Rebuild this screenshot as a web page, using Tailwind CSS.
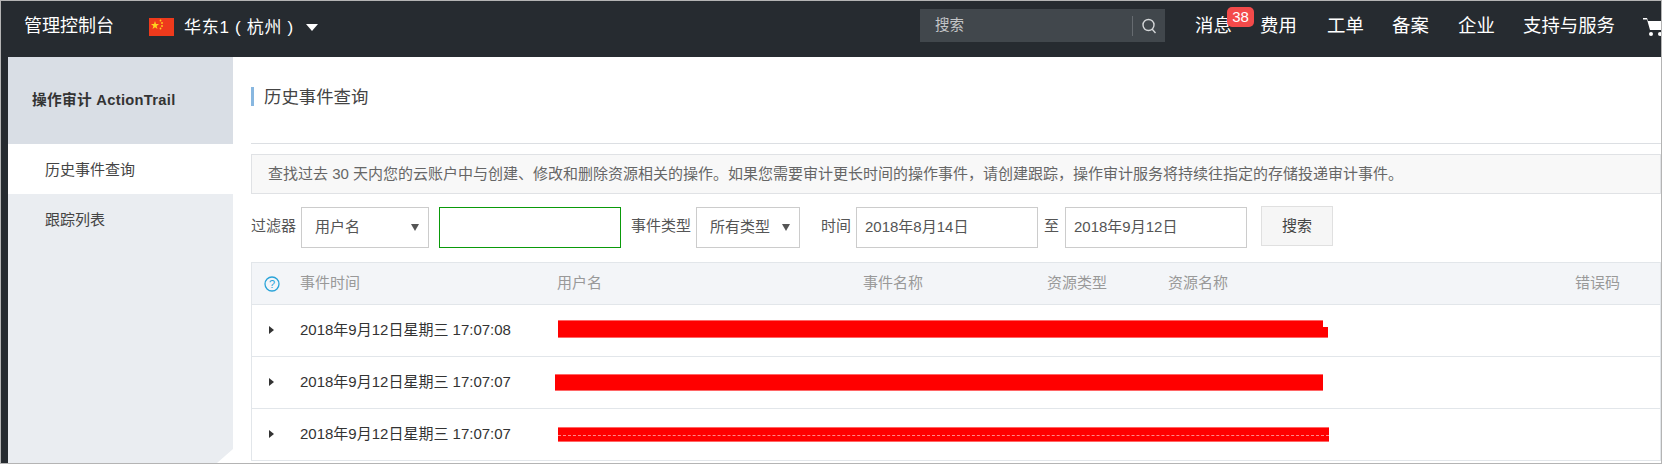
<!DOCTYPE html>
<html lang="zh-CN">
<head>
    <meta charset="UTF-8">
    <title>操作审计 ActionTrail</title>
    <script src="https://cdn.jsdelivr.net/npm/@tailwindcss/browser@4"></script>
</head>
<body class="bg-white">
    <div class="w-[1662px] h-[464px] overflow-hidden border border-[#b4b4b4] flex flex-col font-['Liberation_Sans','Noto_Sans_CJK_SC',sans-serif] text-[15px] text-[#444]">
        <!-- top bar -->
        <header class="h-[56px] shrink-0 bg-[#262b30] flex items-center text-white">
            <div class="ml-[23px] w-[125px] shrink-0 text-[18px] leading-none -mt-[6px]">管理控制台</div>
            <svg class="w-[25px] h-[18px] shrink-0 -mt-[4px]" viewBox="0 0 25 18">
                <rect width="25" height="18" fill="#ee3a1c"/>
                <polygon points="6,3 7,6 10,6 7.6,8 8.5,11 6,9.2 3.5,11 4.4,8 2,6 5,6" fill="#ffd21e"/>
                <circle cx="11.5" cy="2.5" r="0.9" fill="#ffd21e"/><circle cx="13" cy="5" r="0.9" fill="#ffd21e"/>
                <circle cx="13" cy="8" r="0.9" fill="#ffd21e"/><circle cx="11.5" cy="10.5" r="0.9" fill="#ffd21e"/>
            </svg>
            <div class="ml-[10px] w-[111px] shrink-0 text-[17px] tracking-[0.7px] leading-none -mt-[4px] whitespace-pre">华东1 ( 杭州 )</div>
            <span class="ml-[11px] shrink-0 -mt-[4px] w-0 h-0 border-x-[6.5px] border-x-transparent border-t-[7px] border-t-white"></span>
            <div class="ml-[602px] shrink-0 -mt-[7px] w-[245px] h-[33px] bg-[#41474c] flex items-center text-[#c4c6c8] text-[14.5px]">
                <span class="ml-[15px] flex-1">搜索</span>
                <span class="w-px h-[20px] bg-[#666b70]"></span>
                <svg class="w-[16px] h-[16px] mx-[8px]" viewBox="0 0 16 16" fill="none" stroke="#d4d6d8" stroke-width="1.4"><circle cx="7.5" cy="7" r="5.5"/><path d="M11 11l3.5 4"/></svg>
            </div>
            <nav class="ml-[30px] shrink-0 -mt-[5px] flex text-[18.4px] leading-none">
                <span class="relative w-[65px]">消息<span class="absolute left-[32px] -top-[10px] w-[27px] h-[20px] rounded-[5px] bg-[#f34a4a] text-[15px] leading-[20px] text-center">38</span></span>
                <span class="w-[67px]">费用</span>
                <span class="w-[65px]">工单</span>
                <span class="w-[66px]">备案</span>
                <span class="w-[65px]">企业</span>
                <span class="w-[120px] whitespace-nowrap">支持与服务</span>
            </nav>
            <svg class="w-[22px] h-[22px] shrink-0 -mt-[5px]" viewBox="0 0 22 22" fill="#fff"><path d="M0 2h4l1 3h16l-2.5 9H7L4 3.5H0z"/><circle cx="8" cy="18" r="2"/><circle cx="17" cy="18" r="2"/></svg>
        </header>

        <div class="flex-1 flex min-h-0">
            <!-- dark strip + sidebar -->
            <div class="w-[7px] shrink-0 bg-[#262b30]"></div>
            <aside class="relative w-[225px] shrink-0 bg-[#eaedf1]">
                <div class="h-[87px] bg-[#d9dee5] flex items-center pl-[24px] font-bold text-[#333] text-[14.7px] tracking-[0.3px]">操作审计 ActionTrail</div>
                <div class="h-[50px] bg-white flex items-center pl-[37px] pt-[2px] text-[#444]">历史事件查询</div>
                <div class="h-[50px] flex items-center pl-[37px] pt-[2px] text-[#444]">跟踪列表</div>
                <span class="absolute right-0 bottom-0 w-0 h-0 border-l-[16px] border-l-transparent border-b-[14px] border-b-white"></span>
            </aside>

            <!-- main -->
            <main class="flex-1 min-w-0 pl-[18px]">
                <div class="h-[87px] border-b border-[#dcdfe3] flex items-start">
                    <div class="mt-[30px] border-l-[3px] border-[#88b7e0] h-[19px] pl-[10px] text-[17.4px] leading-[21px] text-[#444] whitespace-nowrap">历史事件查询</div>
                </div>
                <div class="mt-[10px] h-[40px] border border-[#e0e2e5] bg-[#f8f8f8] flex items-center pl-[16px] text-[15px] text-[#666] whitespace-nowrap">查找过去 30 天内您的云账户中与创建、修改和删除资源相关的操作。如果您需要审计更长时间的操作事件，请创建跟踪，操作审计服务将持续往指定的存储投递审计事件。</div>

                <div class="mt-[13px] h-[41px] flex items-start text-[#555]">
                    <span class="w-[50px] mt-[8px]">过滤器</span>
                    <div class="w-[128px] h-[41px] border border-[#ccc] flex items-center justify-between pl-[13px] pr-[9px] text-[#555]">用户名<span class="w-0 h-0 border-x-[4px] border-x-transparent border-t-[7px] border-t-[#555]"></span></div>
                    <div class="ml-[10px] w-[182px] h-[41px] border border-[#0a9a0a]"></div>
                    <span class="ml-[10px] w-[65px] mt-[8px]">事件类型</span>
                    <div class="w-[104px] h-[41px] border border-[#ccc] flex items-center justify-between pl-[13px] pr-[9px]">所有类型<span class="w-0 h-0 border-x-[4px] border-x-transparent border-t-[7px] border-t-[#555]"></span></div>
                    <span class="ml-[21px] w-[35px] mt-[8px]">时间</span>
                    <div class="w-[182px] h-[41px] border border-[#ccc] flex items-center pl-[8px] text-[#555]">2018年8月14日</div>
                    <span class="w-[27px] mt-[8px] text-center">至</span>
                    <div class="w-[182px] h-[41px] border border-[#ccc] flex items-center pl-[8px] text-[#555]">2018年9月12日</div>
                    <button class="ml-[14px] -mt-px w-[72px] h-[40px] border border-[#e0e0e0] bg-[#f6f6f6] text-[#444]">搜索</button>
                </div>

                <!-- table -->
                <div class="mt-[14px] border-x border-[#e2e6ea]">
                    <div class="h-[43px] grid grid-cols-[48px_257px_306px_184px_121px_407px_1fr] items-center bg-[#f3f5f8] border-y border-[#e2e6ea] text-[#999]">
                        <span class="pl-[12px]"><svg class="w-[16px] h-[16px]" viewBox="0 0 16 16" fill="none"><circle cx="8" cy="8" r="7" stroke="#29a3d8" stroke-width="1.3"/><text x="8" y="12" text-anchor="middle" font-size="11" fill="#29a3d8" font-family="Liberation Sans">?</text></svg></span>
                        <span>事件时间</span><span>用户名</span><span>事件名称</span><span>资源类型</span><span>资源名称</span><span>错误码</span>
                    </div>
                    <div class="relative h-[52px] border-b border-[#e2e6ea] flex items-center">
                        <span class="ml-[17px] w-[31px] shrink-0"><span class="block w-0 h-0 -mt-[2px] border-y-[4px] border-y-transparent border-l-[5px] border-l-[#333]"></span></span>
                        <span class="text-[#333] whitespace-nowrap">2018年9月12日星期三 17:07:08</span>
                        <span class="absolute left-[306px] top-[15px] w-[765px] h-[18px] bg-[#f00] border-y border-[#f66]"></span>
                        <span class="absolute left-[1070px] top-[22px] w-[6px] h-[11px] bg-[#f00] border-b border-[#f66]"></span>
                    </div>
                    <div class="relative h-[52px] border-b border-[#e2e6ea] flex items-center">
                        <span class="ml-[17px] w-[31px] shrink-0"><span class="block w-0 h-0 -mt-[2px] border-y-[4px] border-y-transparent border-l-[5px] border-l-[#333]"></span></span>
                        <span class="text-[#333] whitespace-nowrap">2018年9月12日星期三 17:07:07</span>
                        <span class="absolute left-[303px] top-[17px] w-[768px] h-[17px] bg-[#f00] border-y border-[#f66]"></span>
                    </div>
                    <div class="relative h-[52px] border-b border-[#e2e6ea] flex items-center">
                        <span class="ml-[17px] w-[31px] shrink-0"><span class="block w-0 h-0 -mt-[2px] border-y-[4px] border-y-transparent border-l-[5px] border-l-[#333]"></span></span>
                        <span class="text-[#333] whitespace-nowrap">2018年9月12日星期三 17:07:07</span>
                        <span class="absolute left-[306px] top-[18px] w-[771px] h-[15px] bg-[#f00] border-y border-[#f66]"><span class="block mt-[7px] border-t border-dashed border-[#f88]"></span></span>
                    </div>
                </div>
            </main>
        </div>
    </div>
</body>
</html>
